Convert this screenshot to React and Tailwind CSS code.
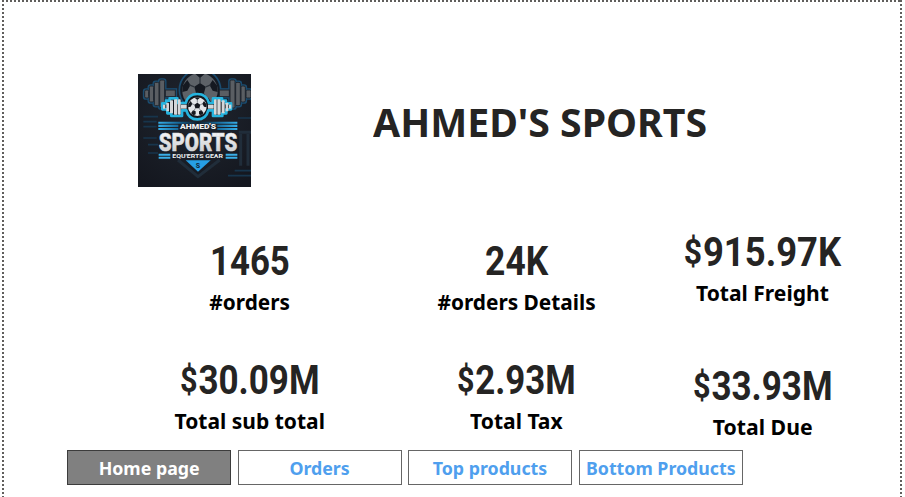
const metrics = [
  {
    column: "w-[266px]",
    gap: "gap-[45px]",
    items: [
      { value: "1465", label: "#orders", valueScale: "scale-x-[0.87]", labelScale: "scale-x-[0.945]" },
      { currency: "$", value: "30.09M", label: "Total sub total", valueScale: "scale-x-[0.875]", labelScale: "scale-x-[0.955]" },
    ],
  },
  {
    column: "w-[267px]",
    gap: "gap-[45px]",
    items: [
      { value: "24K", label: "#orders Details", valueScale: "scale-x-[0.885]", labelScale: "scale-x-[0.947]" },
      { currency: "$", value: "2.93M", label: "Total Tax", valueScale: "scale-x-[0.87]", labelScale: "scale-x-[0.957]" },
    ],
  },
  {
    column: "w-[225px] -mt-[9px]",
    gap: "gap-[60px]",
    items: [
      { currency: "$", value: "915.97K", label: "Total Freight", valueScale: "scale-x-[0.91]", labelScale: "scale-x-[0.957]" },
      { currency: "$", value: "33.93M", label: "Total Due", valueScale: "scale-x-[0.875]", labelScale: "scale-x-[0.965]" },
    ],
  },
];

const pages = [
  { name: "Home page", tone: "bg-[#808080] border-[#3c3c3c] text-white" },
  { name: "Orders", tone: "bg-white border-[#666] text-[#4f9fee]" },
  { name: "Top products", tone: "bg-white border-[#666] text-[#4f9fee]" },
  { name: "Bottom Products", tone: "bg-white border-[#666] text-[#4f9fee]" },
];

function Barbell() {
  return (
    <>
      <rect x="20" y="48" width="12" height="24" rx="4" />
      <rect x="34" y="36" width="13" height="48" rx="4" />
      <rect x="49" y="25" width="14" height="70" rx="4" />
      <rect x="65" y="18" width="15" height="84" rx="4" />
      <rect x="82" y="48" width="30" height="20" />
      <rect x="244" y="48" width="30" height="20" />
      <rect x="276" y="18" width="15" height="84" rx="4" />
      <rect x="293" y="25" width="14" height="70" rx="4" />
      <rect x="309" y="36" width="13" height="48" rx="4" />
      <rect x="324" y="48" width="15" height="24" rx="4" />
    </>
  );
}

function Ball() {
  return (
    <>
      <circle r="28" fill="#e3e6e8" />
      <path d="M-9-6 0-12 9-6 6 5-6 5Z" fill="#15181e" />
      <path d="M-8-27Q0-30 8-27L0-20ZM-27-8-20-17-15-9-20 0-28 2ZM27-8 20-17 15-9 20 0 28 2ZM-19 20-13 11-5 14-5 23-11 26ZM19 20 13 11 5 14 5 23 11 26Z" fill="#15181e" />
      <path d="M0-12V-22M-9-6-17-9M9-6 17-9M-6 5-11 14M6 5 11 14" stroke="#555b62" strokeWidth="2" />
    </>
  );
}

function Logo() {
  return (
    <svg className="h-[113px] w-[113px]" viewBox="0 0 339 339" aria-label="Ahmed's Sports">
      <defs>
        <radialGradient id="ground" cx="50%" cy="35%" r="75%">
          <stop offset="0" stopColor="#20262f" />
          <stop offset="1" stopColor="#14171f" />
        </radialGradient>
        <linearGradient id="stripe" gradientUnits="userSpaceOnUse" x1="61" x2="298" y1="0" y2="0">
          <stop offset="0" stopColor="#35aee8" />
          <stop offset="0.25" stopColor="#17699a" />
          <stop offset="0.5" stopColor="#101c29" />
          <stop offset="0.75" stopColor="#17699a" />
          <stop offset="1" stopColor="#35aee8" />
        </linearGradient>
        <linearGradient id="steel" x1="0" y1="0" x2="0" y2="1">
          <stop offset="0" stopColor="#ffffff" />
          <stop offset="1" stopColor="#c3c6ca" />
        </linearGradient>
      </defs>
      <rect width="339" height="339" fill="url(#ground)" />
      <g stroke="#1a4c70" strokeWidth="11" fill="#1a4c70">
        <Barbell />
        <circle cx="186" cy="48" r="62" strokeWidth="5" fill="#151b24" />
      </g>
      <g fill="#5a5e63" stroke="#20252d" strokeWidth="3"><Barbell /></g>
      <g transform="translate(186 50) scale(1.9)" opacity="0.35"><Ball /></g>
      <path d="M16 128H60M16 143H56M16 158H56M16 192H56M30 212H60M30 237H60M300 132H339M290 290H339M270 305H339" stroke="#17354c" strokeWidth="5" />
      <path d="M302 175H339M308 180V275M330 180V275M120 258 180 308 245 258" stroke="#202d3a" strokeWidth="9" fill="none" />
      <path d="M73 88H84V80H95V73H118V87H143Q151 60 178 60Q205 60 213 87H225V73H252V80H264V88H279V106H265V118H253V126H225V109H211Q204 136 178 136Q152 136 145 109H132V126H100V118H88V106H73Z" fill="#15191f" stroke="#25b4df" strokeWidth="8" strokeLinejoin="round" />
      <g fill="#d4d7d9">
        <rect x="75" y="92" width="7" height="12" />
        <rect x="85" y="86" width="8" height="26" rx="2" />
        <rect x="96" y="79" width="9" height="39" rx="2" />
        <rect x="108" y="76" width="10" height="46" rx="2" />
        <rect x="120" y="76" width="8" height="46" rx="2" />
        <rect x="129" y="92" width="17" height="12" />
        <rect x="210" y="92" width="17" height="12" />
        <rect x="228" y="76" width="8" height="46" rx="2" />
        <rect x="238" y="76" width="10" height="46" rx="2" />
        <rect x="251" y="79" width="9" height="39" rx="2" />
        <rect x="263" y="86" width="8" height="26" rx="2" />
        <rect x="273" y="92" width="7" height="12" />
      </g>
      <g transform="translate(178 98)"><Ball /></g>
      <path d="M61 143H298V149H61ZM61 152H121V159H61ZM238 152H298V159H238ZM61 162H121V168H61ZM238 162H298V168H238Z" fill="url(#stripe)" />
      <text x="180" y="166" textAnchor="middle" textLength="108" lengthAdjust="spacingAndGlyphs" fill="#f0f2f4" className="font-['Roboto',sans-serif] text-[19px] font-black">AHMED'S</text>
      <text x="180" y="232" textAnchor="middle" textLength="236" lengthAdjust="spacingAndGlyphs" fill="url(#steel)" stroke="#d9dcde" strokeWidth="1.5" className="font-['Roboto',sans-serif] text-[77px] font-black">SPORTS</text>
      <path d="M62 242H97M62 251H97M263 242H298M263 251H298" stroke="#3aaee8" strokeWidth="6" />
      <text x="179" y="253" textAnchor="middle" textLength="152" lengthAdjust="spacingAndGlyphs" fill="#eceff1" className="font-['Roboto',sans-serif] text-[17px] font-bold">EQU'ERTS GEAR</text>
      <path d="M143 259H218L180 293Z" fill="#269fe5" />
      <text x="180" y="281" textAnchor="middle" fill="#12314b" className="font-['Roboto',sans-serif] text-[21px] font-black">S</text>
    </svg>
  );
}

function Metric({ currency, value, label, valueScale, labelScale }) {
  return (
    <div className="flex flex-col items-center whitespace-nowrap">
      <div className={`h-[40px] font-['Roboto',sans-serif] text-[40px] font-bold leading-[40px] text-[#252423] ${valueScale}`}>
        {currency && <span className="mr-[1px] align-[2px] text-[35px] leading-none">{currency}</span>}
        {value}
      </div>
      <div className={`mt-[4px] text-[22px] font-bold leading-[30px] text-black ${labelScale}`}>{label}</div>
    </div>
  );
}

export default function App() {
  return (
    <div className="flex h-[497px] w-[905px] overflow-hidden bg-white pl-[2px] font-['Noto_Sans','Open_Sans',sans-serif]">
      <div className="w-[2px] shrink-0 bg-[repeating-linear-gradient(to_bottom,#605e5c_0_2px,#fff_2px_4px)]" />
      <main className="flex w-[896px] shrink-0 flex-col">
        <div className="h-[2px] shrink-0 bg-[repeating-linear-gradient(to_right,#fff_0_2px,#605e5c_2px_4px)]" />
        <header className="mt-[72px] flex h-[113px] shrink-0 pl-[134px]">
          <Logo />
          <h1 className="ml-[122px] mt-[21px] origin-left scale-x-[1.006] whitespace-nowrap text-[39px] font-bold leading-[54px] text-[#252423]">AHMED'S SPORTS</h1>
        </header>
        <section className="mt-[55px] flex h-[208px] shrink-0 items-start pl-[113px]">
          {metrics.map(({ column, gap, items }) => (
            <div key={column} className={`flex shrink-0 flex-col ${column} ${gap}`}>
              {items.map((item) => <Metric key={item.label} {...item} />)}
            </div>
          ))}
        </section>
        <nav className="flex shrink-0 gap-[6.67px] pl-[63px]">
          {pages.map(({ name, tone }) => (
            <button key={name} className={`flex h-[35px] w-[164px] shrink-0 justify-center whitespace-nowrap border pt-[1px] text-[18px] font-bold leading-[33px] ${tone}`}>
              <span className="scale-x-[0.987]">{name}</span>
            </button>
          ))}
        </nav>
      </main>
      <div className="w-[2px] shrink-0 bg-[repeating-linear-gradient(to_bottom,#605e5c_0_2px,#fff_2px_4px)]" />
    </div>
  );
}
